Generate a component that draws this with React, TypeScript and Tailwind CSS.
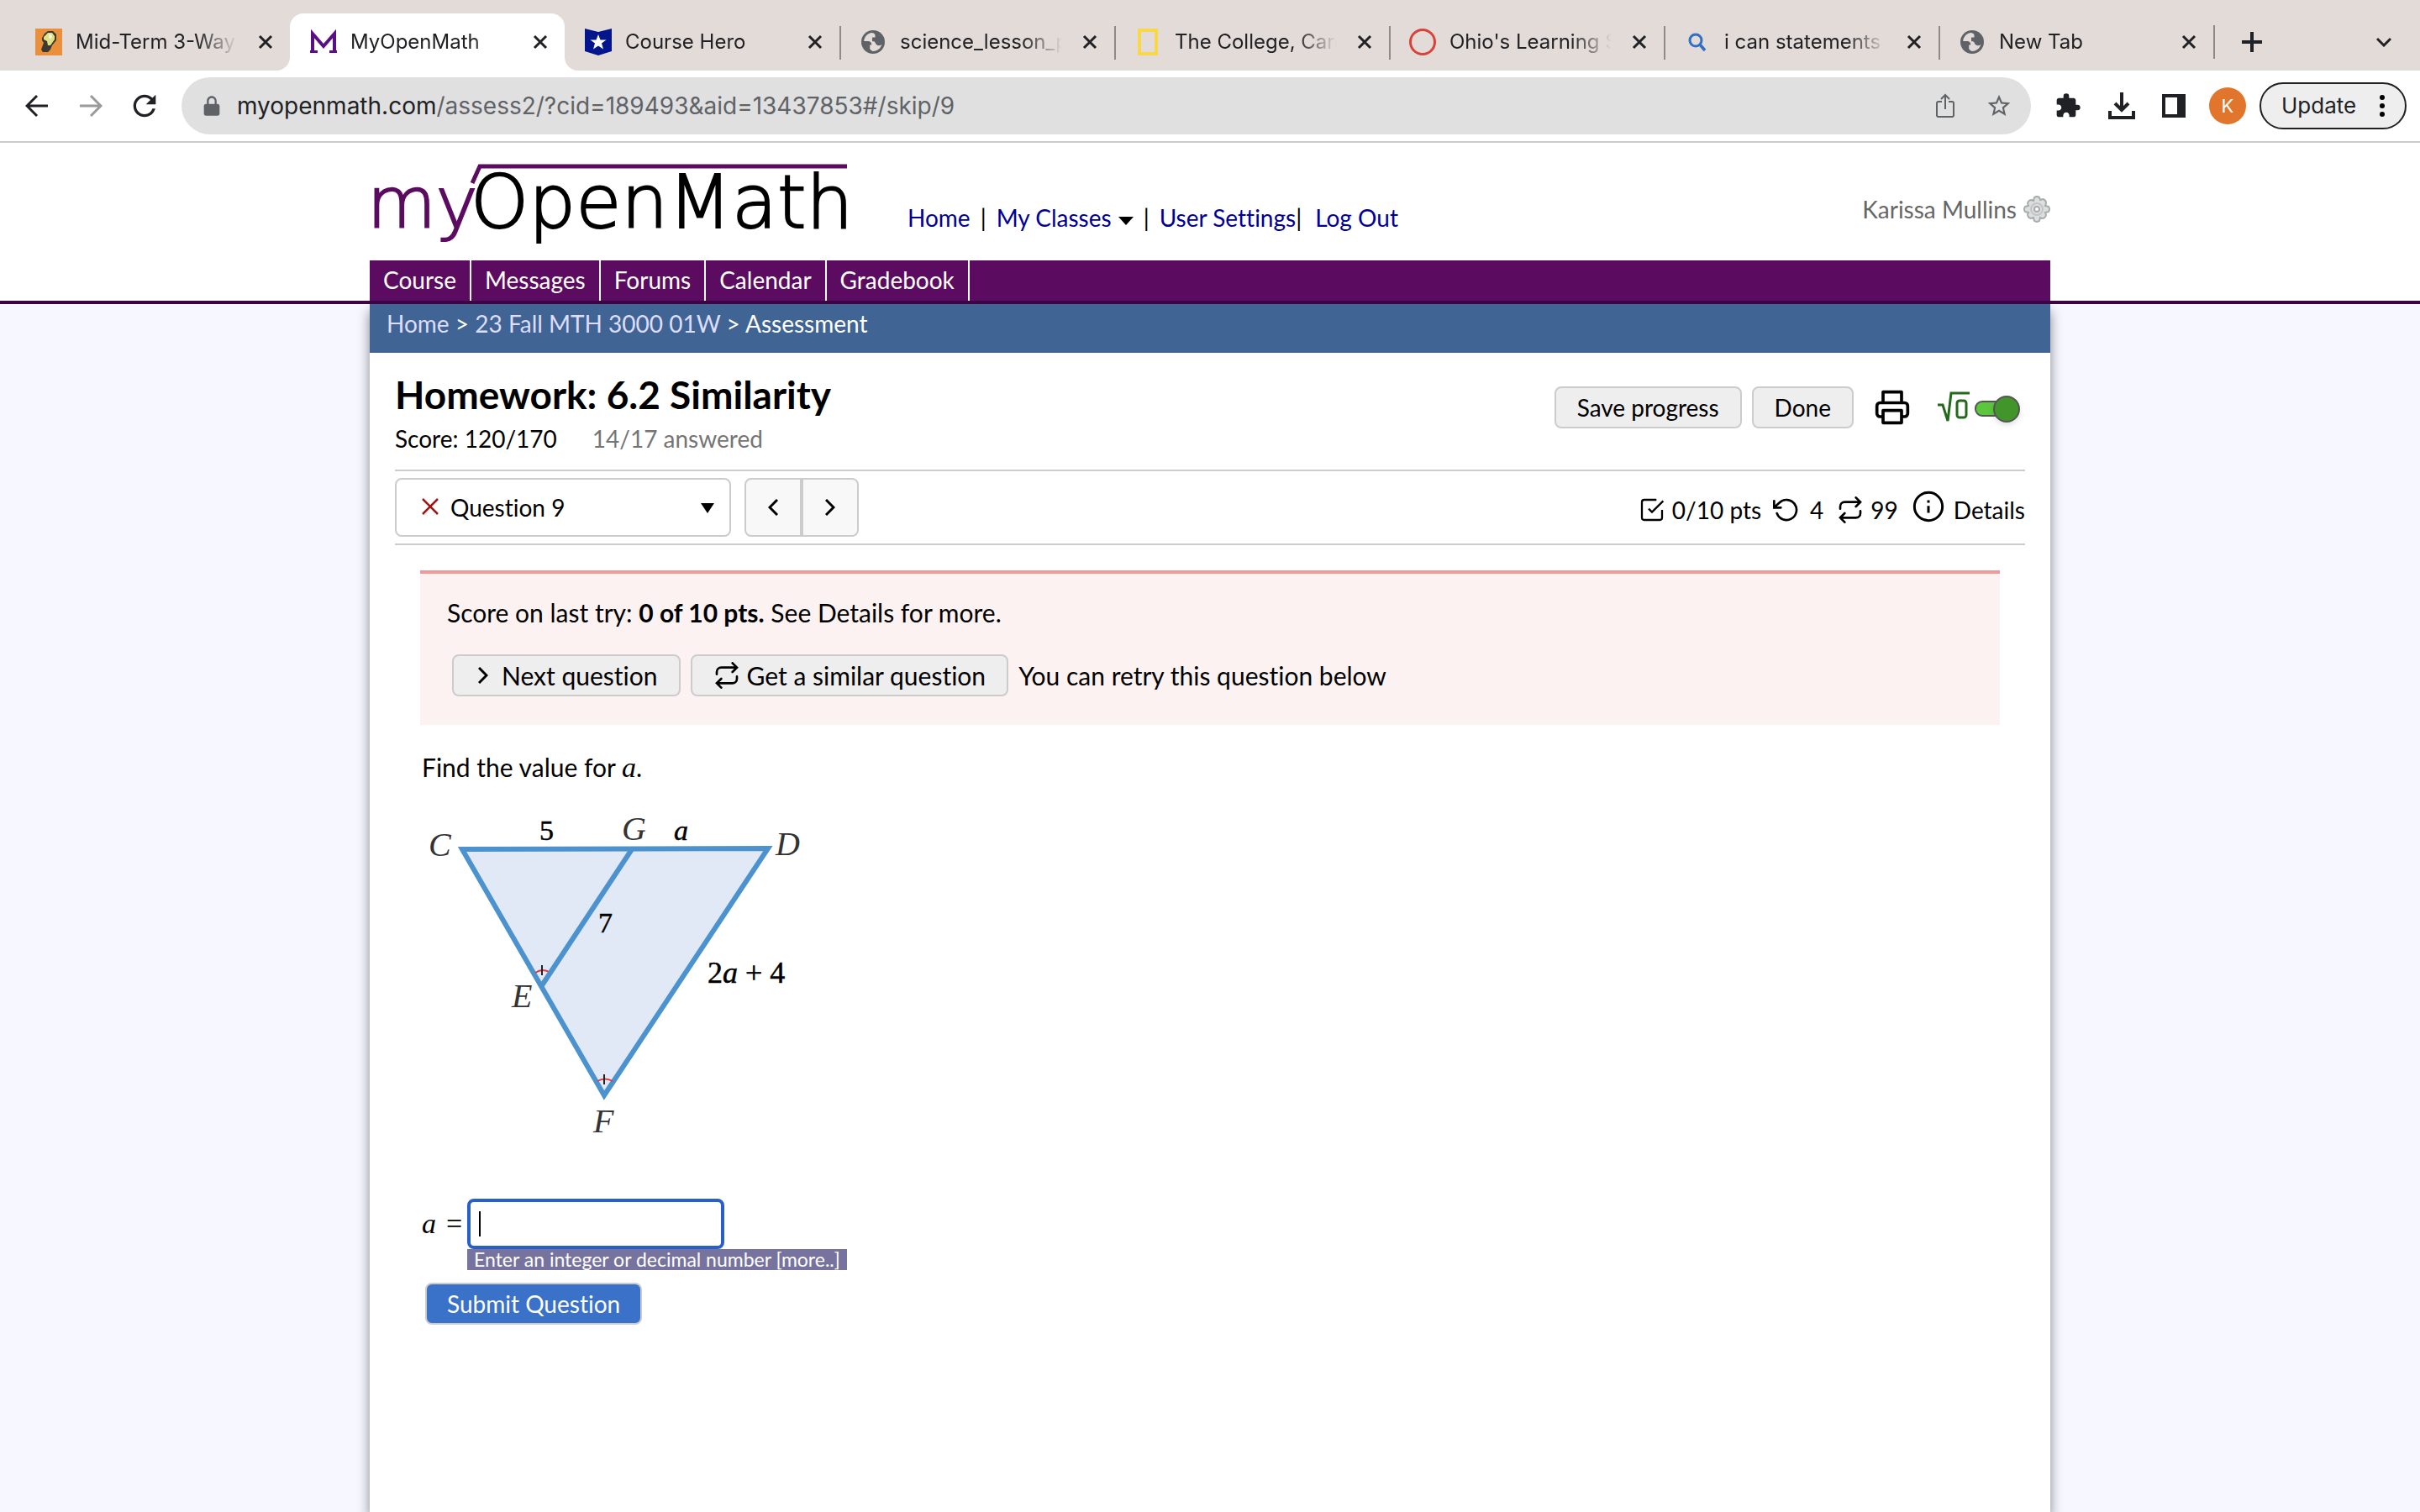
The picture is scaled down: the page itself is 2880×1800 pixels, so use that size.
import { useState, type ReactNode } from "react";
import { BiSolidLockAlt } from "react-icons/bi";
import { MdExtension, MdOutlineStarBorder, MdRefresh } from "react-icons/md";

interface Tab {
  title: string;
  icon: ReactNode;
  active?: boolean;
  divider?: boolean;
}

const GlobeIcon = () => (
  <svg viewBox="0 0 28 28" className="mx-[2px] h-7 w-7 shrink-0">
    <circle cx="14" cy="14" r="14" fill="#5f6368" />
    <path
      d="M12 3C7 4 3.500 8 3.200 13h5c2.200 0 4 1.600 4 3.600v1h-2v4.400c1 1.800 2.400 2.700 4 3 5-.3 9-3.600 10.200-8-2 1.800-4.600 1.700-6.200.2-1.700-1.500-1.500-4-3.700-4H13V8.500h3.500V6c0-1.500-1.500-2.800-4.500-3z"
      fill="#e3dbd8"
    />
  </svg>
);

const TABS: Tab[] = [
  {
    title: "Mid-Term 3-Way",
    icon: (
      <svg viewBox="0 0 32 32" className="h-8 w-8 shrink-0">
        <path d="M0 0h32v32H0z" fill="#ea903c" />
        <path d="M8 11l3-5 4-3h6l4 4v7l-5 6-2 5-3 3H9l-2-3 3-8-2-3z" fill="#3c3a30" />
        <path d="M10 10l5-5h5l3 4v4l-5 7h-3l-1-5-4-2z" fill="#dfe08a" />
        <path d="M16 7h3l1 3-3 3z" fill="#f6f8d8" />
      </svg>
    ),
  },
  {
    title: "MyOpenMath",
    active: true,
    icon: (
      <svg viewBox="0 0 32 32" className="h-8 w-8 shrink-0" fill="none" stroke="#5a0f87">
        <path d="M0 27.500h9M23 27.500h9" strokeWidth="3" />
        <path d="M3 29V6l13 15L29 6v23" strokeWidth="4" />
      </svg>
    ),
  },
  {
    title: "Course Hero",
    icon: (
      <svg viewBox="0 0 32 32" className="h-8 w-8 shrink-0">
        <path d="M0 0l16 4L32 0v27l-16 5-16-5z" fill="#03168c" />
        <path d="M16 7l2.500 6.500h7l-5.500 4 2 7-6-4-6 4 2-7-5.500-4h7z" fill="#fff" />
      </svg>
    ),
  },
  { title: "science_lesson_p", divider: true, icon: <GlobeIcon /> },
  {
    title: "The College, Care",
    divider: true,
    icon: (
      <svg viewBox="0 0 32 32" className="h-8 w-8 shrink-0">
        <path d="M6 2h20v28H6z" fill="none" stroke="#f8d84a" strokeWidth="4" />
      </svg>
    ),
  },
  {
    title: "Ohio's Learning S",
    divider: true,
    icon: (
      <svg viewBox="0 0 32 32" className="h-8 w-8 shrink-0">
        <circle cx="16" cy="16" r="14.500" fill="none" stroke="#d9413b" strokeWidth="3" />
      </svg>
    ),
  },
  {
    title: "i can statements",
    divider: true,
    icon: (
      <svg viewBox="0 0 32 32" className="h-8 w-8 shrink-0" fill="none" stroke="#2f6fc4">
        <circle cx="14" cy="14" r="7" strokeWidth="3" />
        <path d="M19 19l6 7" strokeWidth="3.500" />
      </svg>
    ),
  },
  { title: "New Tab", divider: true, icon: <GlobeIcon /> },
];

const NAV = ["Course", "Messages", "Forums", "Calendar", "Gradebook"];

function TabItem({ tab }: { tab: Tab }) {
  return (
    <div
      className={`relative flex h-[68px] w-[327px] min-w-0 items-center pl-6 pr-5 ${
        tab.active ? "rounded-t-2xl bg-white" : ""
      }`}
    >
      {tab.divider && <span className="absolute left-0 top-[15px] h-10 w-[2px] bg-[#8f8a88]" />}
      {tab.active && (
        <>
          <svg viewBox="0 0 16 16" className="absolute -left-4 bottom-0 h-4 w-4" fill="#fff">
            <path d="M16 0v16H0A16 16 0 0 0 16 0z" />
          </svg>
          <svg viewBox="0 0 16 16" className="absolute -right-4 bottom-0 h-4 w-4" fill="#fff">
            <path d="M0 0v16h16A16 16 0 0 1 0 0z" />
          </svg>
        </>
      )}
      {tab.icon}
      <span className="ml-4 mr-4 min-w-0 flex-1 overflow-hidden whitespace-nowrap [mask-image:linear-gradient(to_right,black_72%,transparent_96%)]">
        {tab.title}
      </span>
      <button aria-label={`Close ${tab.title}`}>
        <svg viewBox="0 0 18 18" className="h-[18px] w-[18px]" stroke="#202124" strokeWidth="3">
          <path d="M2 2l14 14M16 2L2 16" />
        </svg>
      </button>
    </div>
  );
}

function BrowserChrome() {
  return (
    <div className="font-['Inter',sans-serif] text-[24px] leading-8 text-[#202124]">
      <div className="flex items-end bg-[#e3dbd8] pl-[18px] pt-4">
        {TABS.map((tab) => (
          <TabItem key={tab.title} tab={tab} />
        ))}
        <div className="flex h-[68px] flex-1 items-center justify-between pr-[34px]">
          <span className="mr-8 h-10 w-[2px] bg-[#8f8a88]" />
          <button aria-label="New tab" className="mr-auto">
            <svg viewBox="0 0 24 24" className="h-6 w-6" stroke="#202124" strokeWidth="4">
              <path d="M12 0v24M0 12h24" />
            </svg>
          </button>
          <button aria-label="Search tabs">
            <svg viewBox="0 0 18 12" className="h-3 w-[18px]" fill="none" stroke="#202124" strokeWidth="3">
              <path d="M1 2l8 8 8-8" />
            </svg>
          </button>
        </div>
      </div>
      <div className="flex h-[86px] items-center border-b-2 border-[#ccc] bg-white pl-[30px] pr-4">
        <button aria-label="Back" className="mr-9">
          <svg viewBox="0 0 28 28" className="h-7 w-7" fill="none" stroke="#202124" strokeWidth="3">
            <path d="M27 14H3M14 2L2 14l12 12" />
          </svg>
        </button>
        <button aria-label="Forward" className="mr-[30px]">
          <svg viewBox="0 0 28 28" className="h-7 w-7" fill="none" stroke="#9a9a9a" strokeWidth="3">
            <path d="M1 14h24M14 2l12 12-12 12" />
          </svg>
        </button>
        <button aria-label="Reload" className="mr-6">
          <MdRefresh className="h-10 w-10" />
        </button>
        <div className="flex h-[68px] flex-1 items-center rounded-full bg-[#e0e0e0] px-[22px] text-[28px] text-[#5f6368]">
          <BiSolidLockAlt className="mr-4 h-7 w-7" />
          <span className="flex-1">
            <span className="text-[#202124]">myopenmath.com</span>/assess2/?cid=189493&amp;aid=13437853#/skip/9
          </span>
          <svg viewBox="0 0 24 30" className="mr-9 h-[30px] w-6" fill="none" stroke="#5f6368" strokeWidth="2">
            <path d="M8 10H4a2 2 0 0 0-2 2v14a2 2 0 0 0 2 2h16a2 2 0 0 0 2-2V12a2 2 0 0 0-2-2h-4M12 19V2M7 7l5-5 5 5" />
          </svg>
          <MdOutlineStarBorder className="h-8 w-8" />
        </div>
        <MdExtension className="ml-7 h-8 w-8" />
        <svg viewBox="0 0 32 32" className="ml-8 h-8 w-8" fill="none" stroke="#202124" strokeWidth="4">
          <path d="M2 22v8h28v-8M16 0v20M8 13l8 8 8-8" />
        </svg>
        <svg viewBox="0 0 28 28" className="ml-8 h-7 w-7">
          <path d="M0 0h28v28H0zM4 4v20h14V4z" fill="#202124" fillRule="evenodd" />
        </svg>
        <span className="ml-7 flex h-11 w-11 items-center justify-center rounded-full bg-[#e1752b] text-[22px] text-white">
          K
        </span>
        <button className="ml-4 flex h-14 w-[175px] items-center justify-between rounded-full border-2 border-[#202124] bg-[#eee] px-6 text-[26px]">
          Update
          <svg viewBox="0 0 6 26" className="h-[26px] w-[6px]">
            <circle cx="3" cy="3" r="3" />
            <circle cx="3" cy="13" r="3" />
            <circle cx="3" cy="23" r="3" />
          </svg>
        </button>
      </div>
    </div>
  );
}

function Logo() {
  return (
    <svg viewBox="0 0 580 140" className="h-[140px] w-[580px] shrink-0" role="img" aria-label="myOpenMath">
      <g className="font-['DejaVu_Sans_Light','DejaVu_Sans',sans-serif] font-extralight" strokeWidth="2">
        <text x="-3" y="101" fontSize="84" fill="#5b0c60" stroke="#5b0c60">
          my
        </text>
        <text x="120" y="101" fontSize="88" fill="#000" stroke="#000">
          OpenMath
        </text>
      </g>
      <path d="M122 48l9-20h437" fill="none" stroke="#5b0c60" strokeWidth="5" />
    </svg>
  );
}

function SiteHeader() {
  return (
    <header className="border-b-4 border-[#3b0541] bg-white">
      <div className="mx-auto w-full max-w-[2000px]">
        <div className="flex h-[140px] items-start">
          <Logo />
          <div className="flex pt-[71px] text-black">
            <a href="#home" className="ml-[60px] text-[#000099]">Home</a>
            <span className="mx-3">|</span>
            <a href="#classes" className="text-[#000099]">My Classes</a>
            <svg viewBox="0 0 18 10" className="ml-2 mt-[17px] h-[10px] w-[18px]">
              <path d="M0 0h18l-9 10z" />
            </svg>
            <span className="mx-3">|</span>
            <a href="#settings" className="text-[#000099]">User Settings</a>
            <span className="mr-4">|</span>
            <a href="#logout" className="text-[#000099]">Log Out</a>
          </div>
          <div className="ml-auto flex items-center gap-2 pt-[61px] text-[#666]">
            Karissa Mullins
            <svg viewBox="0 0 32 32" className="h-8 w-8" fill="#dcdfdf" stroke="#a9acac" strokeWidth="2">
              <path d="M13 2q3-2 6 0l1 3 3-1q4 1 4 5l-1 3 4 1q2 3 0 6l-4 1 1 3q-1 4-5 4l-2-1-1 4q-3 2-6 0l-1-4-3 1q-4-1-4-5l1-2-4-1q-2-3 0-6l4-1-1-3q1-4 5-4l2 1z" />
              <circle cx="16" cy="16" r="7" stroke="#c2c5c5" />
              <circle cx="16" cy="16" r="3" fill="#fff" />
            </svg>
          </div>
        </div>
        <nav className="flex h-12 bg-[#5b0c60] text-white">
          {NAV.map((item) => (
            <a key={item} href={`#${item}`} className="flex items-center border-r-2 border-white px-4 pb-[2px]">
              {item}
            </a>
          ))}
        </nav>
      </div>
    </header>
  );
}

const RepeatIcon = () => (
  <svg viewBox="0 0 24 24" className="h-8 w-8" fill="none" stroke="#000" strokeWidth="2" strokeLinecap="round">
    <path d="M17 1l4 4-4 4M3 11V9a4 4 0 0 1 4-4h14M7 23l-4-4 4-4M21 13v2a4 4 0 0 1-4 4H3" />
  </svg>
);

const CaretIcon = ({ left }: { left?: boolean }) => (
  <svg viewBox="0 0 12 20" className="h-5 w-3" fill="none" stroke="#000" strokeWidth="3">
    <path d={left ? "M11 1l-9 9 9 9" : "M1 1l9 9-9 9"} />
  </svg>
);

const grayButton =
  "flex h-[50px] items-center rounded-lg border-2 border-[#ccc] bg-[#eee] px-[25px] whitespace-nowrap";

function AssessmentHeader() {
  const [preview, setPreview] = useState(true);

  return (
    <div className="flex items-start justify-between border-b-2 border-[#ccc] pb-[19px] pt-6">
      <div>
        <h1 className="text-[46px] font-bold leading-[52px]">Homework: 6.2 Similarity</h1>
        <p className="mt-2 flex gap-[42px]">
          Score: 120/170 <span className="text-[#757575]">14/17 answered</span>
        </p>
      </div>
      <div className="flex items-center pt-4">
        <button className={grayButton}>Save progress</button>
        <button className={`${grayButton} ml-3`}>Done</button>
        <button aria-label="Print" className="ml-6">
          <svg viewBox="0 0 24 24" className="h-11 w-11" fill="none" stroke="#000" strokeWidth="2" strokeLinejoin="round">
            <path d="M6 9V2h12v7M6 18H4a2 2 0 0 1-2-2v-5a2 2 0 0 1 2-2h16a2 2 0 0 1 2 2v5a2 2 0 0 1-2 2h-2" />
            <path d="M6 14h12v8H6z" />
          </svg>
        </button>
        <label className="ml-8 mr-1 flex items-center">
          <input
            type="checkbox"
            aria-label="Equation preview"
            className="sr-only"
            checked={preview}
            onChange={(e) => setPreview(e.target.checked)}
          />
          <svg viewBox="0 0 38 38" className="h-[38px] w-[38px]" fill="none" stroke="#24691b" strokeWidth="3">
            <path d="M0 16h6l6 19 4-33h22" />
            <rect x="23" y="11" width="11" height="20" rx="3" />
          </svg>
          <svg viewBox="0 0 58 40" className="ml-1 h-10 w-[58px] overflow-visible" stroke="#555" strokeWidth="2">
            <rect x="3" y="13" width="40" height="17" rx="8" fill="#5ac73c" />
            <circle cx="40" cy="22" r="15" fill="#41952a" className="drop-shadow-md" />
          </svg>
        </label>
      </div>
    </div>
  );
}

function QuestionBar() {
  return (
    <div className="flex items-center border-b-2 border-[#ccc] py-2">
      <div className="relative">
        <select
          aria-label="Question"
          className="h-[70px] w-[400px] appearance-none rounded-lg border-2 border-[#ccc] bg-white pl-16"
        >
          <option>Question 9</option>
        </select>
        <svg viewBox="0 0 20 20" className="absolute left-8 top-6 h-5 w-5" stroke="#a01512" strokeWidth="2.500">
          <path d="M1 1l18 18M19 1L1 19" />
        </svg>
        <svg viewBox="0 0 16 12" className="absolute right-5 top-[30px] h-3 w-4">
          <path d="M0 0h16l-8 12z" />
        </svg>
      </div>
      <div className="ml-4 flex h-[70px] rounded-lg border-2 border-[#ccc] bg-[#f8f8f8]">
        <button aria-label="Previous question" className="flex w-[68px] items-center justify-center border-r-4 border-[#ccc]">
          <CaretIcon left />
        </button>
        <button aria-label="Next question" className="flex w-16 items-center justify-center">
          <CaretIcon />
        </button>
      </div>
      <div className="ml-auto flex items-center pt-[6px]">
        <svg viewBox="0 0 24 24" className="h-8 w-8" fill="none" stroke="#000" strokeWidth="1.700">
          <path d="M9 11l3 3L22 4M21 12v7a2 2 0 0 1-2 2H5a2 2 0 0 1-2-2V5a2 2 0 0 1 2-2h11" />
        </svg>
        <span className="ml-2">0/10 pts</span>
        <svg viewBox="0 0 24 24" className="ml-[14px] h-8 w-8" fill="none" stroke="#000" strokeWidth="2" strokeLinecap="round">
          <path d="M1 4v6h6M3.510 15a9 9 0 1 0 2.130-9.360L1 10" />
        </svg>
        <span className="ml-3 mr-4">4</span>
        <RepeatIcon />
        <span className="ml-2">99</span>
        <button className="ml-4 flex items-center">
          <svg viewBox="0 0 24 24" className="mb-2 mr-[10px] h-10 w-10" fill="none" stroke="#000" strokeWidth="1.800">
            <circle cx="12" cy="12" r="10" />
            <path d="M12 16.500v-5M12 9.300V7.500" />
          </svg>
          Details
        </button>
      </div>
    </div>
  );
}

function Triangle() {
  return (
    <svg viewBox="500 960 480 400" className="mt-[29px] h-[400px] w-[480px]">
      <path d="M550 1011L914 1010L719 1304z" fill="#e1e8f6" stroke="#4b92cf" strokeWidth="6" />
      <path d="M637 1158q9-6 18 0M711 1287q9-5 18 0" fill="none" stroke="#e03a3e" strokeWidth="2" />
      <path d="M752 1011L645 1173" stroke="#4b92cf" strokeWidth="6" />
      <path d="M645 1149v12M719 1279v12" stroke="#222" strokeWidth="2" />
      <g className="font-['Liberation_Serif',serif] italic" fontSize="40" fill="#333">
        <text x="510" y="1019">C</text>
        <text x="740" y="1000">G</text>
        <text x="923" y="1018">D</text>
        <text x="609" y="1199">E</text>
        <text x="706" y="1348">F</text>
      </g>
      <g className="font-['Liberation_Serif',serif]" fontSize="34" fill="#000" stroke="#000" strokeWidth="0.500">
        <text x="642" y="1000">5</text>
        <text x="802" y="1000" fontStyle="italic">a</text>
        <text x="712" y="1110">7</text>
        <text x="842" y="1170" fontSize="36">
          2<tspan fontStyle="italic">a</tspan> + 4
        </text>
      </g>
    </svg>
  );
}

function Question() {
  const [answer, setAnswer] = useState("");

  return (
    <section className="mx-[30px] mt-[30px]">
      <div className="border-t-4 border-[#ef9a9a] bg-[#fcf2f2] px-8 pb-[34px] pt-7 text-[30px]">
        <p>
          Score on last try: <b>0 of 10 pts.</b> See Details for more.
        </p>
        <div className="mt-8 flex items-center pl-[6px]">
          <button className={grayButton}>
            <span className="ml-1 mr-4">
              <CaretIcon />
            </span>
            Next question
          </button>
          <button className={`${grayButton} ml-3`}>
            <span className="mr-2">
              <RepeatIcon />
            </span>
            Get a similar question
          </button>
          <span className="ml-3">You can retry this question below</span>
        </div>
      </div>

      <p className="mt-8 pl-[2px] text-[30px]">
        Find the value for <i className="font-['Liberation_Serif',serif] text-[34px] leading-none">a</i>.
      </p>
      <Triangle />

      <div className="mt-[67px] flex items-start pl-[2px]">
        <label
          htmlFor="answer"
          className="flex w-[54px] gap-3 whitespace-nowrap pt-3 font-['Liberation_Serif',serif] text-[34px]"
        >
          <i>a</i> =
        </label>
        <div>
          <div className="relative w-[306px]">
            <input
              id="answer"
              value={answer}
              onChange={(e) => setAnswer(e.target.value)}
              className="block h-[60px] w-full rounded-lg border-4 border-[#285fc9] bg-white px-[10px] outline-none"
            />
            <span className="absolute left-[14px] top-[15px] h-[30px] w-[2px] bg-black" />
          </div>
          <p className="bg-[#77739f] px-2 text-[23px] leading-[25px] text-white">
            Enter an integer or decimal number [more..]
          </p>
        </div>
      </div>
      <button className="ml-[6px] mt-[15px] h-[50px] rounded-lg border-2 border-[#ccc] bg-[#3a71c9] px-6 text-white">
        Submit Question
      </button>
    </section>
  );
}

export default function App() {
  return (
    <div className="flex min-h-screen flex-col bg-[#f6f7ff]">
      <BrowserChrome />
      <div className="flex flex-1 flex-col font-['Lato',sans-serif] text-[28px] leading-9 text-black [font-variant-ligatures:none]">
        <SiteHeader />
        <main className="mx-auto w-full max-w-[2000px] flex-1 bg-white shadow-[0_8px_14px_rgba(0,0,0,0.45)] [clip-path:inset(0_-20px)]">
          <div className="h-[58px] bg-[#406494] px-5 pt-[5px] text-white">
            <a href="#home" className="text-[#ddf]">Home</a> &gt;{" "}
            <a href="#course" className="text-[#ddf]">23 Fall MTH 3000 01W</a> &gt; Assessment
          </div>
          <div className="px-[30px]">
            <AssessmentHeader />
            <QuestionBar />
            <Question />
          </div>
        </main>
      </div>
    </div>
  );
}
